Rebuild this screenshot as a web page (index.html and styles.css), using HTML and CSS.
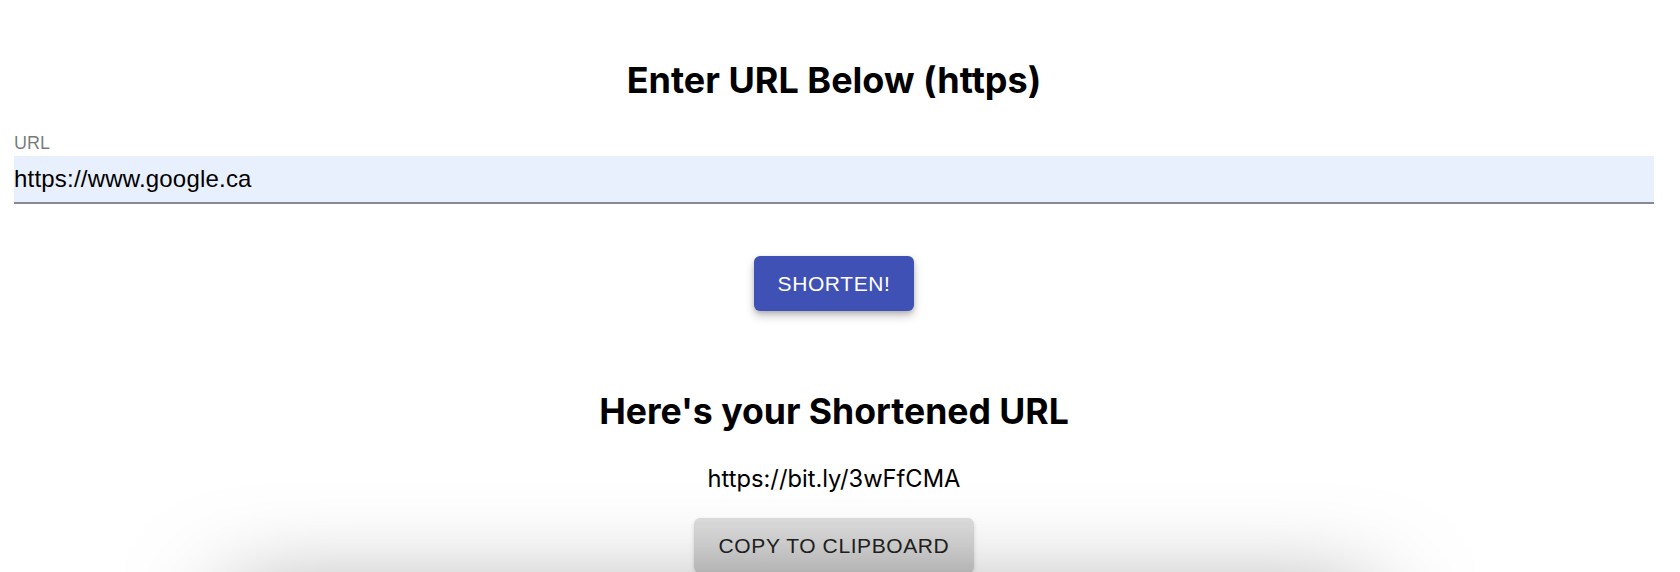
FILE: index.html
```html
<!DOCTYPE html>
<html lang="en">
<head>
<meta charset="utf-8">
<title>URL Shortener</title>
<link rel="stylesheet" href="styles.css">
</head>
<body>
<main class="page">
  <h2 class="heading heading-top">Enter URL Below (https)</h2>
  <div class="field">
    <label class="field-label" for="url">URL</label>
    <input class="field-input" id="url" type="text" value="https://www.google.ca">
  </div>
  <button class="btn btn-primary" type="button">SHORTEN!</button>
  <h2 class="heading heading-result">Here's your Shortened URL</h2>
  <p class="short-url">https://bit.ly/3wFfCMA</p>
  <button class="btn btn-default" type="button">COPY TO CLIPBOARD</button>
  <div class="paper"></div>
</main>
</body>
</html>
```

FILE: styles.css
```css
html, body {
  margin: 0;
  padding: 0;
  background: #ffffff;
  overflow: hidden;
}

.page {
  width: 1640px;
  margin-left: 14px;
  display: flex;
  flex-direction: column;
  align-items: center;
  font-family: Inter, "Liberation Sans", sans-serif;
  color: #000;
}

.heading {
  font-family: Inter, "Liberation Sans", sans-serif;
  font-weight: 700;
  font-size: 36px;
  line-height: 44px;
  margin: 0;
}

.heading-top {
  margin-top: 58px;
}

.field {
  align-self: stretch;
  display: flex;
  flex-direction: column;
  margin-top: 30px;
}

.field-label {
  font-family: "Liberation Sans", Arial, sans-serif;
  font-size: 18px;
  line-height: 22px;
  color: rgba(0, 0, 0, 0.54);
  margin-bottom: 2px;
}

.field-input {
  box-sizing: border-box;
  height: 48px;
  border: 0;
  border-bottom: 2px solid #878a95;
  background: #e8f0fe;
  padding: 0;
  margin: 0;
  font-family: "Liberation Sans", Arial, sans-serif;
  font-size: 24px;
  letter-spacing: 0.2px;
  color: #000;
  outline: none;
}

.btn {
  font-family: "Liberation Sans", Arial, sans-serif;
  font-size: 21px;
  letter-spacing: 0.6px;
  line-height: 37px;
  padding: 9px 24px;
  border: 0;
  border-radius: 6px;
}

.btn-primary {
  margin-top: 52px;
  background: #3f51b5;
  color: #fff;
  box-shadow: 0 5px 10px rgba(0, 0, 0, 0.22), 0 2px 4px rgba(0, 0, 0, 0.14);
}

.heading-result {
  margin-top: 79px;
  font-size: 35.6px;
}

.short-url {
  font-size: 23.7px;
  line-height: 30px;
  margin: 30px 0 0;
}

.btn-default {
  margin-top: 24px;
  padding: 9px 25px;
  background: linear-gradient(#dedede, #cdcdcd);
  color: #222;
  box-shadow: 0 2px 4px rgba(0, 0, 0, 0.15);
}

.paper {
  align-self: flex-start;
  margin-left: 216px;
  margin-top: 30px;
  width: 1140px;
  height: 60px;
  background: #fff;
  box-shadow: 0 0 100px rgba(0, 0, 0, 0.5);
}
```
